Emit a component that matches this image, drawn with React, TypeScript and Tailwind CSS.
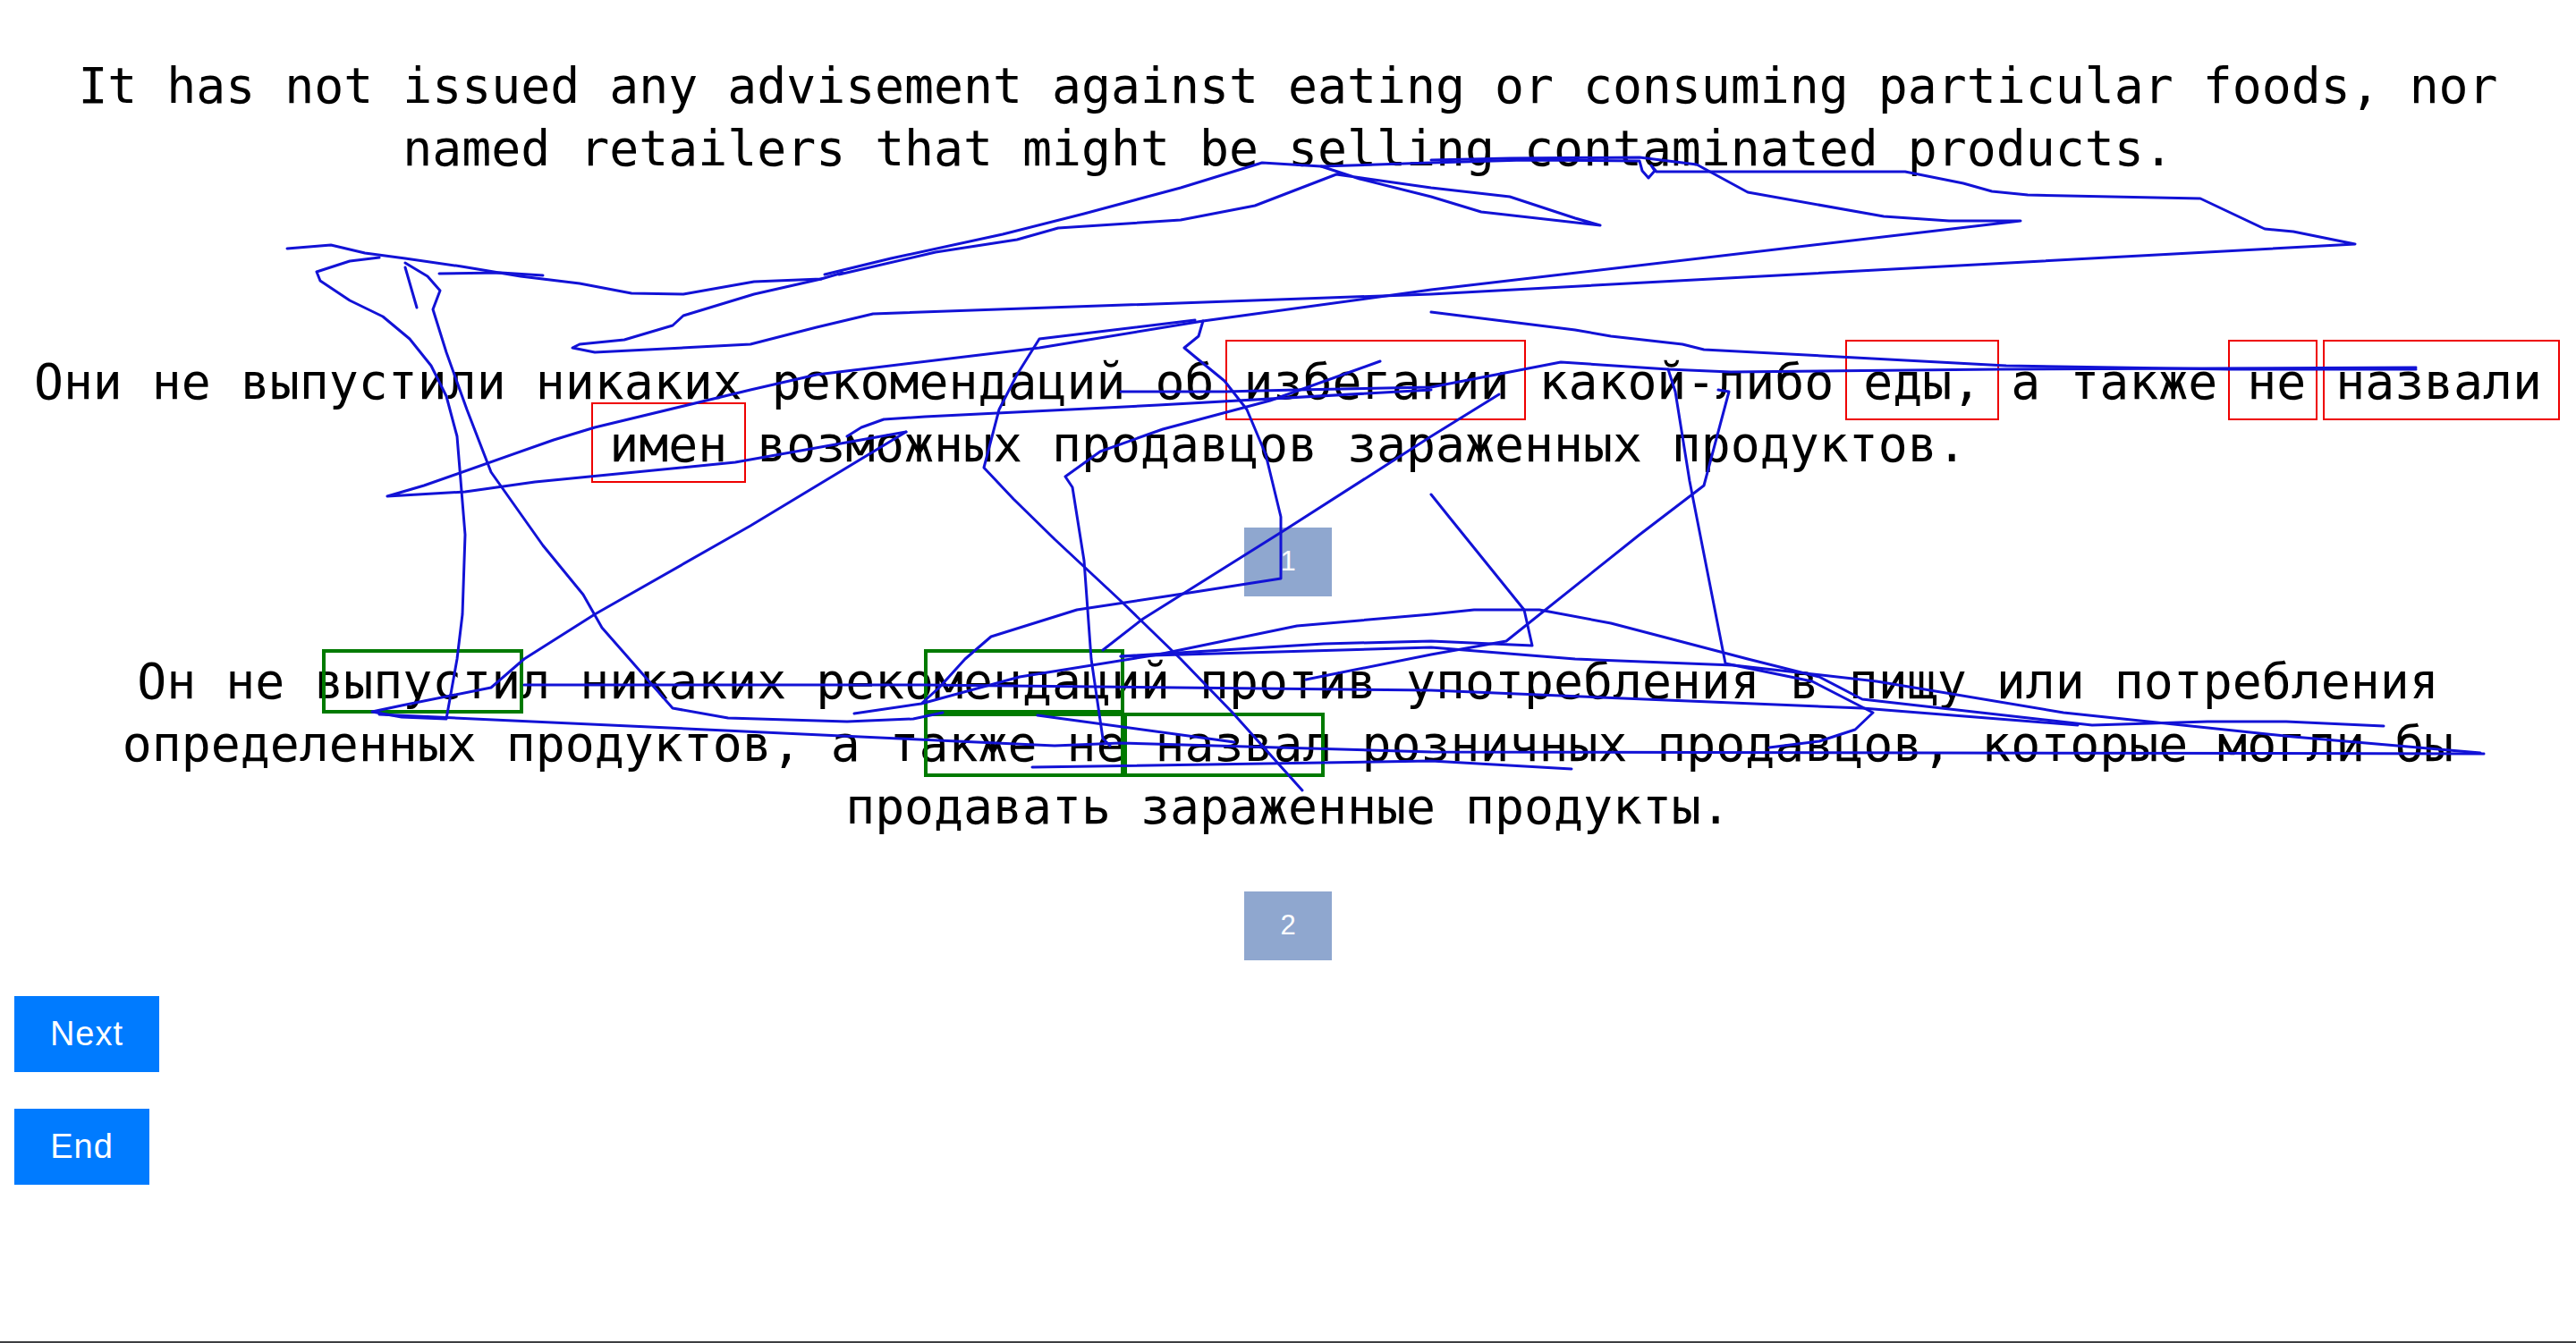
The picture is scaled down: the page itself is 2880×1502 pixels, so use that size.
import React from "react";

const strokes: string[] = [
  "321,278 370,274 408,283 453,289 516,298 582,309 648,317 706,328 764,329 843,315 918,312 942,305",
  "491,306 560,305 607,308",
  "922,307 996,289 1121,262 1212,239 1320,210 1411,182 1477,186 1600,182 1704,179 1833,180 1836,191 1843,199 1850,191 1846,185 1852,192 2130,192 2195,205 2227,214 2267,218 2460,222 2532,256 2564,259 2633,273 1600,329 976,351 913,366 839,385 665,394 640,389 648,385 698,380 752,364 764,353 843,329 918,312",
  "938,307 1046,282 1137,268 1183,255 1320,246 1403,230 1494,195 1600,210 1688,220 1761,244 1789,252 1656,237 1600,220 1520,200 1477,186",
  "1600,179 1688,177 1833,176 1897,184 1954,215 2106,242 2179,247 2259,247 1600,324 1345,359 1162,389 913,419 839,436 665,478 619,492 474,543 433,555 520,550 598,539 822,517 1013,483",
  "1013,483 839,588 665,687 586,737 549,769 449,789 416,796 449,802 499,804 511,737 517,687 520,598 511,488 499,443 482,409 458,379 428,354 391,336 358,314 354,304 391,292 424,288",
  "453,299 466,344",
  "453,294 478,309 492,325 484,346 499,394 522,458 549,528 607,610 652,665 673,702 752,792 814,803 947,807 1021,804 1054,797",
  "424,799 1005,826 1179,834 1253,831 1600,841 2777,843",
  "1345,359 1340,376 1324,389 1336,399 1369,426 1394,458 1415,508 1432,578 1432,647 1336,662 1204,682 1108,712 1079,737 1050,769 1030,787 955,798 1030,787 1140,757 1295,732 1450,700 1600,687 1648,682 1721,682 1801,697 1954,737 2034,757 2082,782 2339,811 2468,807 2556,807 2665,812",
  "1336,358 1162,379 1137,419 1117,458 1100,523 1133,558 1179,603 1253,672 1320,737 1378,797 1456,884",
  "1543,404 1420,448 1300,480 1230,505 1191,533 1199,545 1212,627 1220,737 1233,826 1241,834",
  "1600,349 1761,369 1801,376 1881,385 1905,391 2243,409 2492,413 2701,413",
  "1253,438 1369,438 1450,436 1600,433 1745,405 1865,413 1935,416 2235,413 2701,411",
  "947,488 963,478 988,469 1034,466 1295,453 1600,436",
  "1865,413 1873,438 1889,538 1929,742 2026,762 2094,797 2074,816 2034,829 1978,836",
  "1921,436 1933,438 1905,543 1833,598 1684,717 1600,732 1460,760",
  "1676,441 1600,488 1436,593 1278,692 1233,727",
  "1600,553 1620,578 1704,682 1713,722 1600,717 1480,720 1253,734",
  "1253,734 1600,724 1761,737 1938,744 2098,762 2307,797 2564,824 2773,842",
  "586,766 1030,766 1600,772 2082,792 2323,811",
  "1154,858 1600,851 1757,860",
  "1160,800 1380,830",
];

const mono = "font-['DejaVu_Sans_Mono',monospace]";

export default function App() {
  return (
    <div className="relative flex h-[1502px] w-[2880px] flex-col overflow-hidden bg-white">
      <div className="flex flex-1 flex-col pt-[61px]">
        <p className={`${mono} text-center text-[54.8px] leading-[70px] text-black`}>
          It has not issued any advisement against eating or consuming particular foods, nor named retailers that might be selling contaminated products.
        </p>

        <div className="relative mt-[191px]">
          <p className={`${mono} text-center text-[54.8px] leading-[70px] text-black`}>
            Они не выпустили никаких рекомендаций об избегании какой-либо еды, а также не назвали имен возможных продавцов зараженных продуктов.
          </p>
          <div className="absolute left-[1370px] top-[-12px] h-[90px] w-[336px] border-2 border-[#ee0000]" />
          <div className="absolute left-[2063px] top-[-12px] h-[90px] w-[172px] border-2 border-[#ee0000]" />
          <div className="absolute left-[2491px] top-[-12px] h-[90px] w-[100px] border-2 border-[#ee0000]" />
          <div className="absolute left-[2597px] top-[-12px] h-[90px] w-[265px] border-2 border-[#ee0000]" />
          <div className="absolute left-[661px] top-[58px] h-[90px] w-[173px] border-2 border-[#ee0000]" />
        </div>

        <div className="mx-auto mt-[58px] flex h-[77px] w-[98px] items-center justify-center bg-[#8fa7cf] font-['Liberation_Sans',Arial,sans-serif] text-[31px] text-white">
          1
        </div>

        <div className="relative mt-[60px]">
          <p className={`${mono} text-center text-[54.8px] leading-[70px] text-black`}>
            Он не выпустил никаких рекомендаций против употребления в пищу или потребления определенных продуктов, а также не назвал розничных продавцов, которые могли бы продавать зараженные продукты.
          </p>
          <div className="absolute left-[360px] top-[-1px] h-[72px] w-[225px] border-4 border-[#007a00]" />
          <div className="absolute left-[1033px] top-[-1px] h-[72px] w-[224px] border-4 border-[#007a00]" />
          <div className="absolute left-[1033px] top-[70px] h-[72px] w-[224px] border-4 border-[#007a00]" />
          <div className="absolute left-[1256px] top-[70px] h-[72px] w-[225px] border-4 border-[#007a00]" />
        </div>

        <div className="mx-auto mt-[60px] flex h-[77px] w-[98px] items-center justify-center bg-[#8fa7cf] font-['Liberation_Sans',Arial,sans-serif] text-[31px] text-white">
          2
        </div>

        <div className="mt-[40px] flex flex-col items-start gap-[41px] pl-[16px]">
          <button className="flex h-[85px] w-[162px] items-center justify-center bg-[#007bff] font-['Liberation_Sans',Arial,sans-serif] text-[38px] tracking-[1px] text-white">
            Next
          </button>
          <button className="flex h-[85px] w-[151px] items-center justify-center bg-[#007bff] font-['Liberation_Sans',Arial,sans-serif] text-[38px] tracking-[1px] text-white">
            End
          </button>
        </div>
      </div>
      <div className="h-[2px] w-full bg-[#3d3f41]" />

      <svg
        className="pointer-events-none absolute left-0 top-0"
        width={2880}
        height={1502}
        viewBox="0 0 2880 1502"
      >
        {strokes.map((pts, i) => (
          <polyline
            key={i}
            points={pts}
            fill="none"
            stroke="#1212d6"
            strokeWidth={3}
            strokeLinejoin="round"
            strokeLinecap="round"
          />
        ))}
      </svg>
    </div>
  );
}
